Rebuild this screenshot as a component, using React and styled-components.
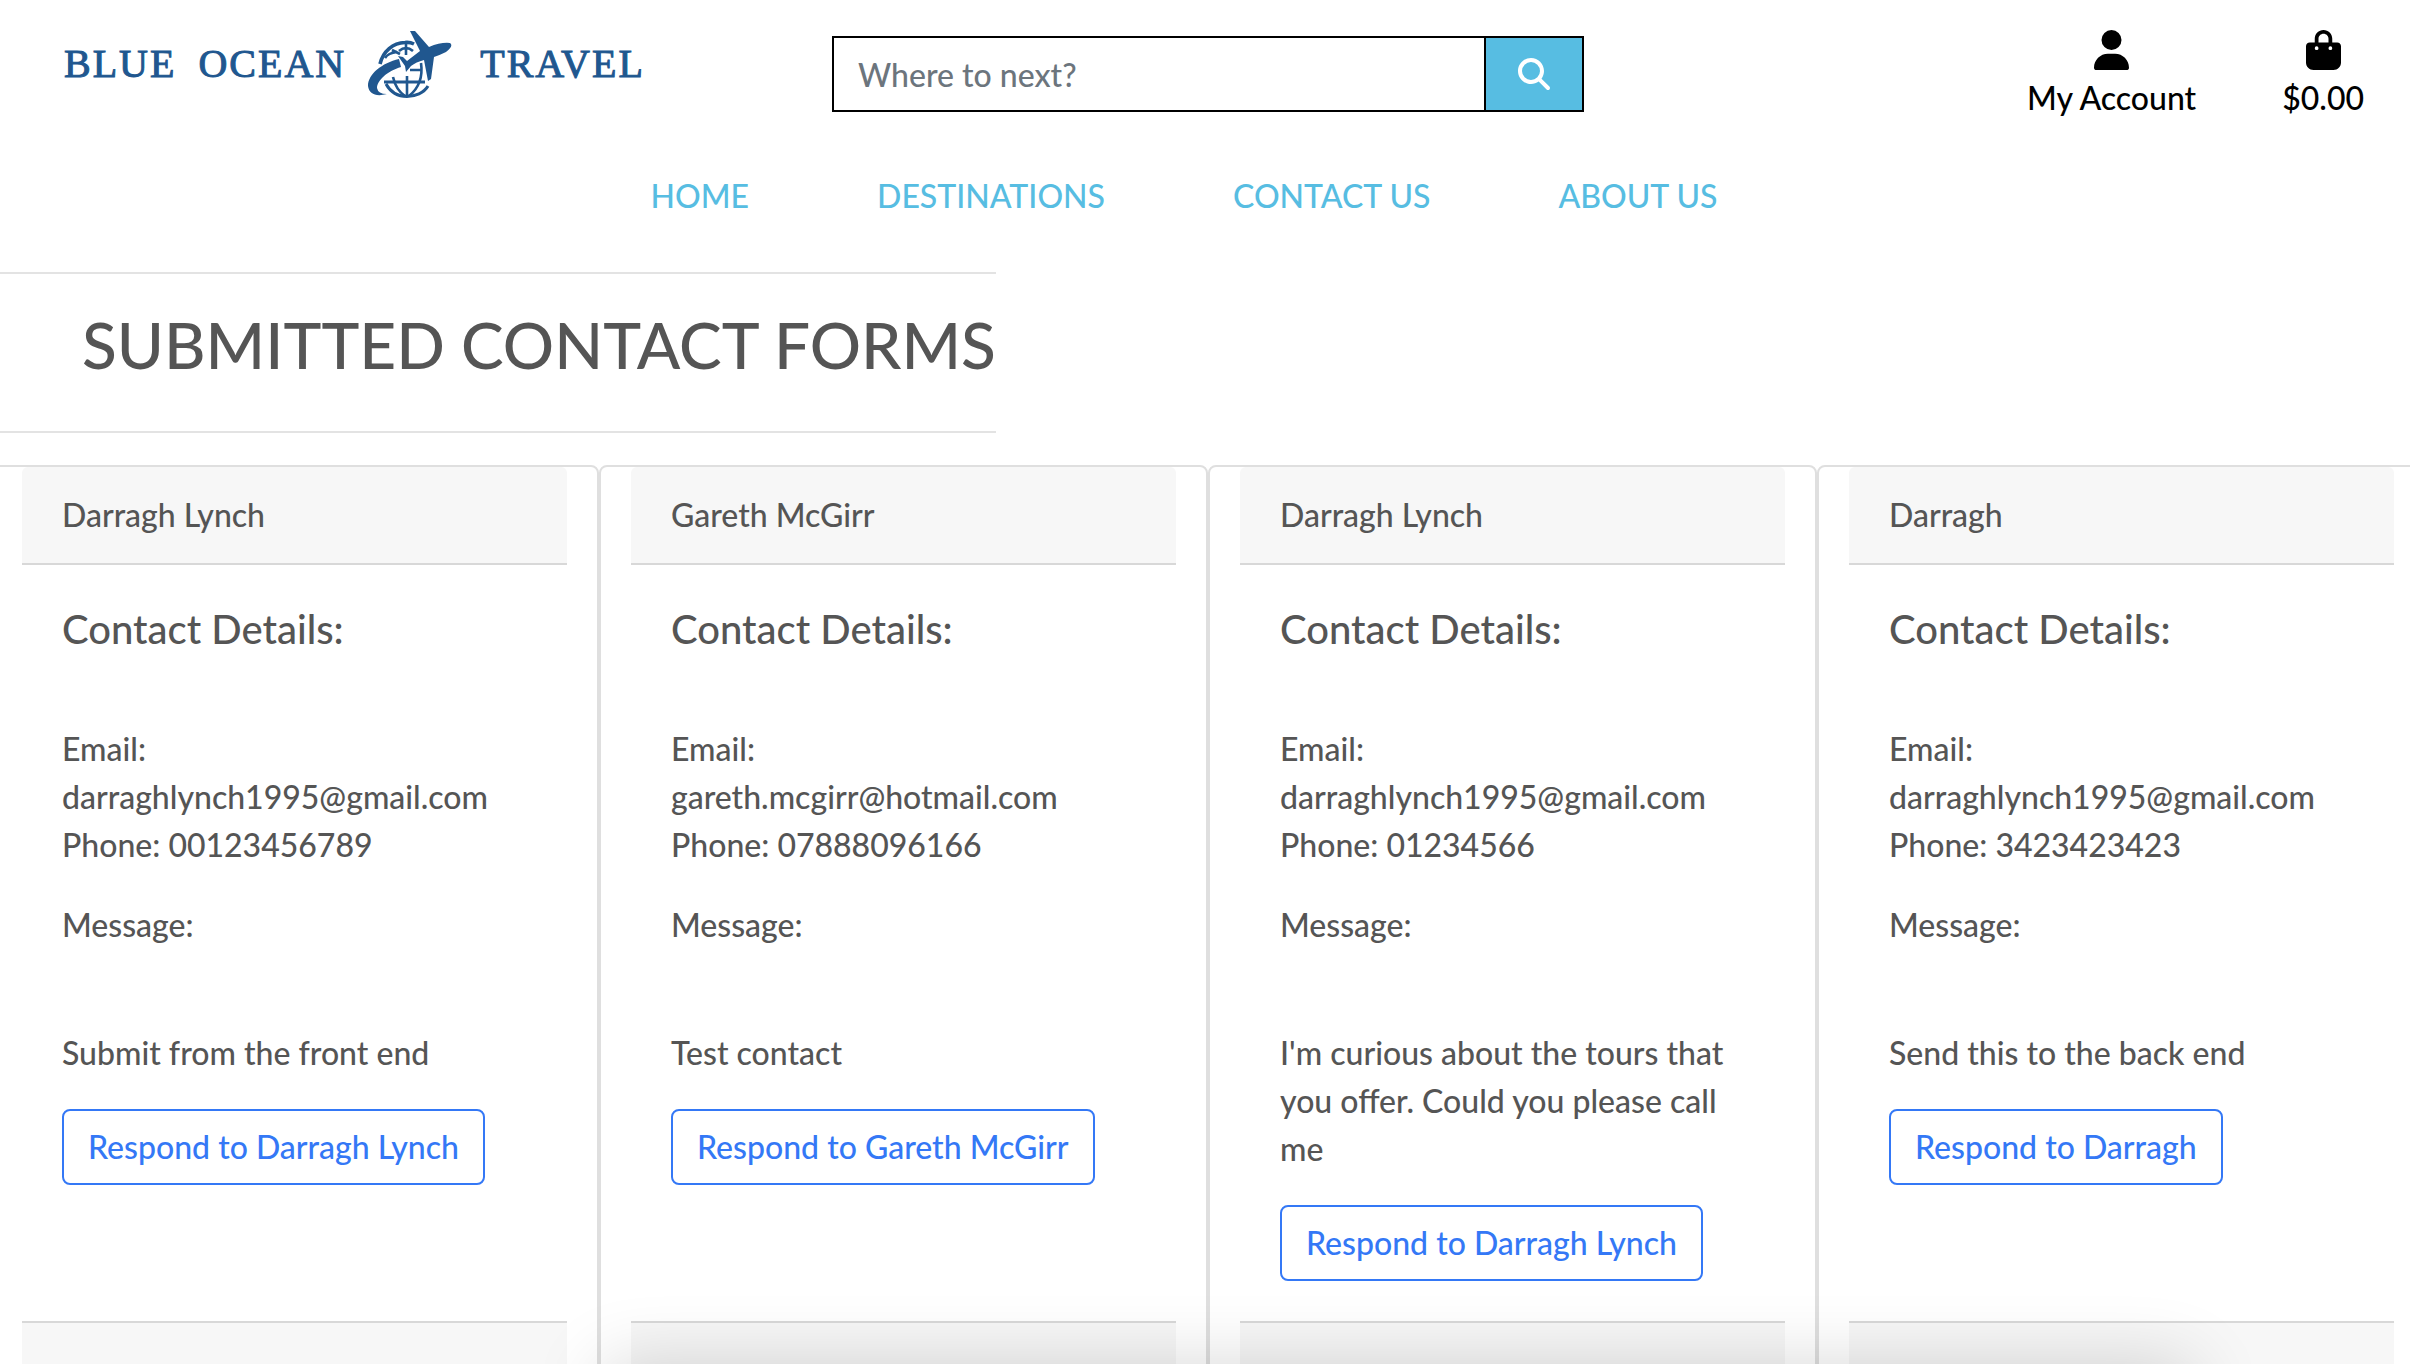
import React from "react";
import styled, { createGlobalStyle } from "styled-components";
import { FaMagnifyingGlass, FaUser, FaBagShopping } from "react-icons/fa6";

const GlobalStyle = createGlobalStyle`
  *, *::before, *::after { box-sizing: border-box; }
  body {
    margin: 0;
    background: #fff;
    color: #555;
    font-family: Lato, "Liberation Sans", sans-serif;
    font-size: 32px;
    font-weight: 500;
    line-height: 48px;
  }
  a { text-decoration: none; }
  h1, h2, p { margin: 0; font-weight: 500; }
`;

const Page = styled.div`
  height: 100vh;
  overflow: hidden auto;
  scrollbar-width: none;
`;

const Header = styled.header`
  display: grid;
  grid-template-columns: minmax(0, 1fr) minmax(0, 752px) minmax(0, 1fr);
  align-items: start;
  padding: 28px 46px 0 52px;
`;

const Brand = styled.a`
  display: flex;
  align-items: center;
  gap: 22px;
  height: 72px;
  padding-left: 12px;
  color: #20578f;
  font-family: "Liberation Serif", serif;
  font-size: 40px;
  font-weight: 400;
  letter-spacing: 2px;
  white-space: nowrap;
  -webkit-text-stroke: 1px #20578f;
`;

const BrandMark = styled.svg`
  flex: none;
  width: 84px;
  height: 72px;
  margin-right: 6px;
`;

const Search = styled.form`
  display: flex;
  margin-top: 8px;
`;

const SearchInput = styled.input`
  flex: 1;
  min-width: 0;
  height: 76px;
  padding: 12px 24px;
  border: 2px solid #000;
  border-right: 0;
  border-radius: 0;
  background: #fff;
  color: #555;
  font: inherit;
  &::placeholder { color: #6c757d; opacity: 1; }
`;

const SearchButton = styled.button`
  display: flex;
  align-items: center;
  justify-content: center;
  width: 100px;
  border: 2px solid #000;
  background: #57bde2;
  color: #fff;
  font-size: 32px;
  padding: 0;
`;

const Account = styled.div`
  display: flex;
  justify-content: flex-end;
  gap: 86px;
`;

const AccountLink = styled.a`
  display: flex;
  flex-direction: column;
  align-items: center;
  gap: 4px;
  padding-top: 2px;
  color: #000;
  svg { width: 35px; height: 40px; }
`;

const Nav = styled.nav`
  display: flex;
  justify-content: center;
  gap: 128px;
  padding: 50px 42px 0 0;
`;

const NavLink = styled.a`
  color: #57bde2;
  text-transform: uppercase;
`;

const TitleBar = styled.section`
  width: fit-content;
  margin: 52px 0 32px;
  padding: 32px 0 48px 82px;
  border: solid #e3e3e3;
  border-width: 2px 0;
`;

const Title = styled.h1`
  font-size: 64px;
  line-height: 77px;
  text-transform: uppercase;
`;

const Cards = styled.main`
  display: grid;
  grid-template-columns: repeat(4, minmax(0, 1fr));
  margin: 0 -16px 0 -10px;
`;

const Card = styled.article`
  display: flex;
  flex-direction: column;
  padding: 0 30px;
  border: 2px solid #dfdfdf;
  border-radius: 8px;
`;

const CardHeader = styled.header`
  padding: 24px 40px;
  border-bottom: 2px solid #d8d8d8;
  border-radius: 6px 6px 0 0;
  background: #f7f7f7;
`;

const CardBody = styled.div`
  flex: 1;
  padding: 40px;
`;

const CardTitle = styled.h2`
  margin-bottom: 72px;
  font-size: 40px;
`;

const Text = styled.p`
  margin-bottom: ${(p) => (p.$spaced ? 80 : 32)}px;
`;

const Respond = styled.button`
  display: block;
  padding: 12px 24px;
  border: 2px solid #3478f6;
  border-radius: 8px;
  background: transparent;
  color: #3478f6;
  font: inherit;
  white-space: nowrap;
`;

const CardFooter = styled.footer`
  height: 98px;
  border-top: 2px solid #d8d8d8;
  background: #f7f7f7;
`;

const BottomShade = styled.div`
  position: fixed;
  top: 100%;
  left: 25%;
  right: 9%;
  height: 100px;
  box-shadow: 0 0 72px rgba(0, 0, 0, 0.16);
  pointer-events: none;
`;

const links = ["Home", "Destinations", "Contact us", "About us"];

const forms = [
  { name: "Darragh Lynch", email: "darraghlynch1995@gmail.com", phone: "00123456789", message: "Submit from the front end" },
  { name: "Gareth McGirr", email: "gareth.mcgirr@hotmail.com", phone: "07888096166", message: "Test contact" },
  { name: "Darragh Lynch", email: "darraghlynch1995@gmail.com", phone: "01234566", message: "I'm curious about the tours that you offer. Could you please call me" },
  { name: "Darragh", email: "darraghlynch1995@gmail.com", phone: "3423423423", message: "Send this to the back end" },
];

function GlobePlane() {
  return (
    <BrandMark viewBox="0 0 84 72" aria-hidden="true">
      <g fill="none" stroke="currentColor" strokeWidth="2.6">
        <path d="M12 36C15 23 25 15 37 14.500Q42 14 46 16" strokeWidth="3.600" />
        <path d="M17 30Q20 25 29 24M24 22L32 26M38 15v12M31 23Q38 17 45 23" />
        <path d="M16 54h41M18 56C23 65 31 68.500 39 68.500S56 65 60 58" strokeWidth="3" />
        <path d="M25 49Q28 62 37 68M39 48v20M53 35Q56 56 41 68M42 42h12" />
      </g>
      <g fill="currentColor">
        <path d="M42 3h5L61 19Q73 14 82 15Q86 18 78 24Q72 27 66 29L63 51L60 53L56 32Q48 34 43 38L38 44L37 38L30 28L35 29L39 33L52 23Z" />
        <path d="M31 31L33 39C20 43 9 52 9 60Q10 66 19 66C8 69 1 66 0 58C0 46 14 35 31 31Z" />
      </g>
    </BrandMark>
  );
}

export default function App() {
  return (
    <>
      <GlobalStyle />
      <Page>
        <Header>
          <Brand href="#" aria-label="Blue Ocean Travel">
            <span>BLUE</span>
            <span>OCEAN</span>
            <GlobePlane />
            <span>TRAVEL</span>
          </Brand>
          <Search onSubmit={(e) => e.preventDefault()}>
            <SearchInput type="text" placeholder="Where to next?" aria-label="Where to next?" />
            <SearchButton type="submit" aria-label="Search">
              <FaMagnifyingGlass />
            </SearchButton>
          </Search>
          <Account>
            <AccountLink href="#">
              <FaUser />
              My Account
            </AccountLink>
            <AccountLink href="#">
              <FaBagShopping />
              $0.00
            </AccountLink>
          </Account>
        </Header>
        <Nav>
          {links.map((label) => (
            <NavLink key={label} href="#">{label}</NavLink>
          ))}
        </Nav>
        <TitleBar>
          <Title>Submitted Contact Forms</Title>
        </TitleBar>
        <Cards>
          {forms.map((form, i) => (
            <Card key={i}>
              <CardHeader>{form.name}</CardHeader>
              <CardBody>
                <CardTitle>Contact Details:</CardTitle>
                <Text>
                  Email: <br />
                  {form.email}
                  <br />
                  Phone: {form.phone}
                </Text>
                <Text $spaced>Message:</Text>
                <Text>{form.message}</Text>
                <Respond type="button">Respond to {form.name}</Respond>
              </CardBody>
              <CardFooter />
            </Card>
          ))}
        </Cards>
      </Page>
      <BottomShade />
    </>
  );
}
